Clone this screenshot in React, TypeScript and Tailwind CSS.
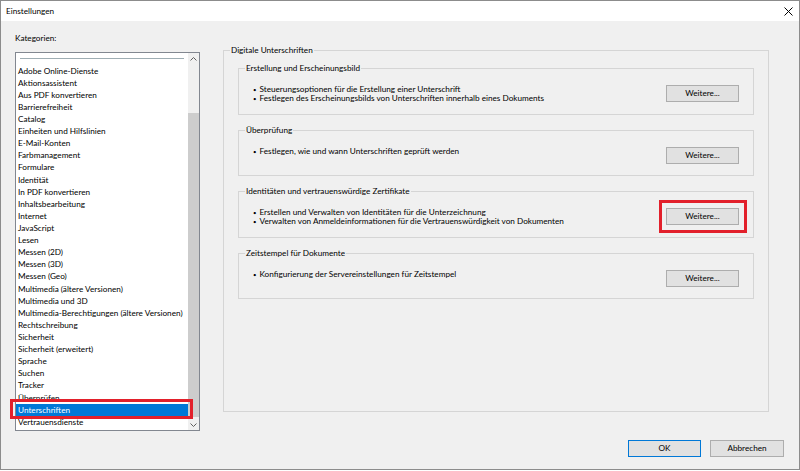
import React from 'react';

const categories = [
  'Adobe Online-Dienste',
  'Aktionsassistent',
  'Aus PDF konvertieren',
  'Barrierefreiheit',
  'Catalog',
  'Einheiten und Hilfslinien',
  'E-Mail-Konten',
  'Farbmanagement',
  'Formulare',
  'Identität',
  'In PDF konvertieren',
  'Inhaltsbearbeitung',
  'Internet',
  'JavaScript',
  'Lesen',
  'Messen (2D)',
  'Messen (3D)',
  'Messen (Geo)',
  'Multimedia (ältere Versionen)',
  'Multimedia und 3D',
  'Multimedia-Berechtigungen (ältere Versionen)',
  'Rechtschreibung',
  'Sicherheit',
  'Sicherheit (erweitert)',
  'Sprache',
  'Suchen',
  'Tracker',
  'Überprüfen',
  'Unterschriften',
  'Vertrauensdienste',
];

const groups = [
  {
    title: 'Erstellung und Erscheinungsbild',
    bullets: [
      'Steuerungsoptionen für die Erstellung einer Unterschrift',
      'Festlegen des Erscheinungsbilds von Unterschriften innerhalb eines Dokuments',
    ],
  },
  {
    title: 'Überprüfung',
    bullets: ['Festlegen, wie und wann Unterschriften geprüft werden'],
  },
  {
    title: 'Identitäten und vertrauenswürdige Zertifikate',
    bullets: [
      'Erstellen und Verwalten von Identitäten für die Unterzeichnung',
      'Verwalten von Anmeldeinformationen für die Vertrauenswürdigkeit von Dokumenten',
    ],
  },
  {
    title: 'Zeitstempel für Dokumente',
    bullets: ['Konfigurierung der Servereinstellungen für Zeitstempel'],
  },
];

const Chevron = ({ up }: { up?: boolean }) => (
  <svg width="7" height="4" viewBox="0 0 7 4" className="block">
    <path d={up ? 'M0.5 3.5 L3.5 0.5 L6.5 3.5' : 'M0.5 0.5 L3.5 3.5 L6.5 0.5'} fill="none" stroke="#606060" strokeWidth="1" />
  </svg>
);

const WinButton = ({ label, focused }: { label: string; focused?: boolean }) => (
  <button
    className={`w-[73px] h-[17px] bg-[#e1e1e1] border flex items-center justify-center leading-none ${
      focused ? 'border-[#0078d7]' : 'border-[#adadad]'
    }`}
  >
    {label}
  </button>
);

export default function App() {
  return (
    <div className="relative w-[800px] h-[470px] bg-[#f0f0f0] border border-[#8c8c8c] flex flex-col overflow-hidden font-['Lato','Noto_Sans',sans-serif] text-[8.2px] text-black">
      {/* Title bar */}
      <div className="h-[20px] bg-white flex items-center justify-between pl-[5px] pr-[6px] shrink-0">
        <span className="text-[8.2px]">Einstellungen</span>
        <svg width="9" height="9" viewBox="0 0 9 9">
          <path d="M0.5 0.5 L8.5 8.5 M8.5 0.5 L0.5 8.5" stroke="#000" strokeWidth="1" />
        </svg>
      </div>

      <div className="flex-1 flex flex-col pl-[14px] pr-[15px] pt-[11px]">
        <div className="flex items-start h-[399px]">
          {/* Categories */}
          <div className="w-[185px] flex flex-col">
            <div className="leading-[12px] mb-[8px]">Kategorien:</div>
            <div className="h-[379px] bg-white border border-[#828790] flex">
              <div className="flex-1 flex flex-col overflow-hidden">
                <div className="pt-[5px] px-[4px] mb-[5.6px]">
                  <div className="h-px bg-[#9eadb3]" />
                </div>
                {categories.map((c) => (
                  <div
                    key={c}
                    className={`h-[12.12px] leading-[12.12px] pl-[2px] whitespace-nowrap shrink-0 ${
                      c === 'Unterschriften' ? 'bg-[#0078d7] text-white' : ''
                    }`}
                  >
                    {c}
                  </div>
                ))}
              </div>
              <div className="w-[11px] bg-[#f0f0f0] flex flex-col">
                <div className="h-[11px] flex items-center justify-center">
                  <Chevron up />
                </div>
                <div className="flex-1 pt-[49px]">
                  <div className="h-[304px] bg-[#cdcdcd]" />
                </div>
                <div className="h-[11px] flex items-center justify-center">
                  <Chevron />
                </div>
              </div>
            </div>
          </div>

          {/* Digitale Unterschriften */}
          <fieldset className="ml-[23px] mt-[12px] w-[546px] h-[368px] border border-[#d5d5d5]">
            <legend className="ml-[6px] px-[1px] leading-[12px]">Digitale Unterschriften</legend>
            <div className="pt-[6px] px-[14px] flex flex-col gap-[9px]">
              {groups.map((g) => (
                <fieldset key={g.title} className="border border-[#d5d5d5]">
                  <legend className="ml-[6px] px-[1px] leading-[12px]">{g.title}</legend>
                  <div className="pt-[11px] pb-[11px] pl-[14px] pr-[14px] flex items-start justify-between">
                    <div className="flex flex-col">
                      {g.bullets.map((b) => (
                        <div key={b} className="h-[9px] leading-[9px] whitespace-nowrap">
                          <span className="text-[6px] mr-[3px]">•</span>
                          {b}
                        </div>
                      ))}
                    </div>
                    <WinButton label="Weitere..." />
                  </div>
                </fieldset>
              ))}
            </div>
          </fieldset>
        </div>

        <div className="mt-[9px] flex justify-end gap-[9px]">
          <WinButton label="OK" focused />
          <div className="w-[74px] h-[17px] bg-[#e1e1e1] border border-[#adadad] flex items-center justify-center leading-none">
            Abbrechen
          </div>
        </div>
      </div>

      {/* Highlight annotations */}
      <div className="absolute left-[9px] top-[398px] w-[183px] h-[20px] border-[3px] border-[#e2202b]" />
      <div className="absolute left-[658px] top-[199px] w-[88px] h-[33px] border-[3px] border-[#e2202b]" />
    </div>
  );
}
